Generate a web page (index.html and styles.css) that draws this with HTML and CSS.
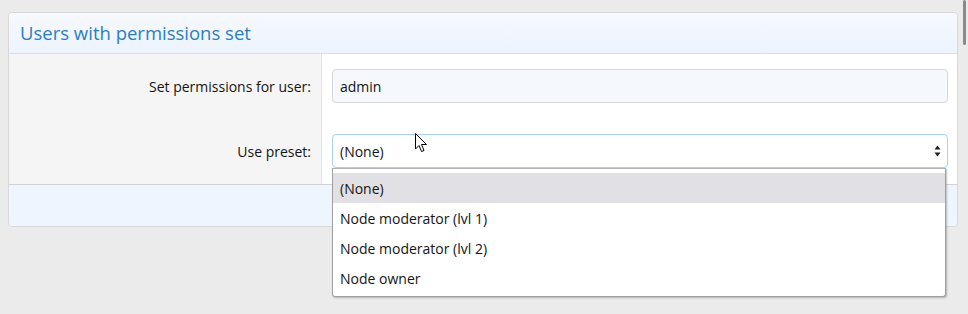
FILE: index.html
```html
<!DOCTYPE html>
<html lang="en">
<head>
  <meta charset="UTF-8" />
  <title>Users with permissions set</title>
  <link rel="stylesheet" href="styles.css">
</head>
<body>
  <div class="block">
    <div class="block-header">Users with permissions set</div>
    <div class="block-body">
      <div class="form-row">
        <div class="form-label">Set permissions for user:</div>
        <div class="form-input">
          <div class="input">admin</div>
        </div>
      </div>
      <div class="form-row">
        <div class="form-label">Use preset:</div>
        <div class="form-input">
          <div class="select-wrap">
            <div class="select">
              <span>(None)</span>
              <svg class="select-arrow" width="7" height="12" viewBox="0 0 7 12">
                <path d="M3.5 0.5 L6.5 4.5 L0.5 4.5 Z M0.5 7.5 L6.5 7.5 L3.5 11.5 Z" fill="#1e1e1e"/>
              </svg>
            </div>
            <ul class="select-list">
              <li class="selected">(None)</li>
              <li>Node moderator (lvl 1)</li>
              <li>Node moderator (lvl 2)</li>
              <li>Node owner</li>
            </ul>
          </div>
        </div>
      </div>
    </div>
    <div class="block-footer"></div>
  </div>

  <!-- mouse pointer -->
  <svg class="cursor" width="13" height="20" viewBox="0 0 13 20">
    <path d="M0.5 0.5 L0.5 16 L4 12.5 L6.5 18.5 L9 17.5 L6.5 11.5 L11.5 11.5 Z" fill="#fff" stroke="#000" stroke-width="1"/>
  </svg>

  <div class="scrollbar-thumb"></div>
</body>
</html>
```

FILE: styles.css
```css
* {
  margin: 0;
  padding: 0;
  box-sizing: border-box;
}

body {
  font-family: 'Open Sans', 'Noto Sans', sans-serif;
  font-size: 14px;
  color: #141414;
  background: #ebebeb;
  padding: 12px 10px 0 8px;
  height: 314px;
  overflow: hidden;
}

.block {
  background: #fff;
  border: 1px solid #d8d8d8;
  border-radius: 4px;
}

.block-header {
  height: 41px;
  padding: 7px 11px 0;
  font-size: 18.5px;
  color: #2a7fc0;
  background: linear-gradient(to bottom, #f6f9fe, #edf4fd);
  border-bottom: 1px solid #d8dee6;
  border-radius: 4px 4px 0 0;
}

.form-row {
  display: flex;
  height: 65px;
}

.form-label {
  width: 313px;
  flex-shrink: 0;
  background: #f5f5f5;
  border-right: 1px solid #e3e3e3;
  text-align: right;
  padding: 23px 10px 0 0;
}

.form-input {
  flex: 1;
  padding: 15px 9px 0 10px;
}

.input {
  height: 34px;
  padding: 7px 7px 0;
  background: #f5f9fe;
  border: 1px solid #d8d8d8;
  border-radius: 4px;
}

.select-wrap {
  position: relative;
}

.select {
  display: flex;
  justify-content: space-between;
  align-items: center;
  height: 34px;
  padding: 0 6px 0 7px;
  background: #fff;
  border: 1px solid #a9d2f3;
  border-radius: 4px;
}

.select-arrow {
  display: block;
}

/* open dropdown list */
.select-list {
  position: absolute;
  top: 34px;
  left: 0;
  right: 2px;
  list-style: none;
  background: #fff;
  border: 1px solid #a0a0a0;
  border-top-color: #b4b4b4;
  border-radius: 0 0 3px 3px;
  padding: 4px 0 3px;
  box-shadow: 1px 1px 2px rgba(0, 0, 0, 0.25);
}

.select-list li {
  height: 30px;
  line-height: 32px;
  padding: 0 7px;
}

.select-list li.selected {
  background: #e1e0e5;
}

.block-footer {
  height: 42px;
  background: #edf5fe;
  border-top: 1px solid #d2d2d2;
  border-radius: 0 0 4px 4px;
}

.cursor {
  position: absolute;
  left: 415px;
  top: 133px;
}

.scrollbar-thumb {
  position: absolute;
  right: 2px;
  top: 0;
  width: 3px;
  height: 45px;
  background: #8a8a8a;
  border-radius: 2px;
}
```
